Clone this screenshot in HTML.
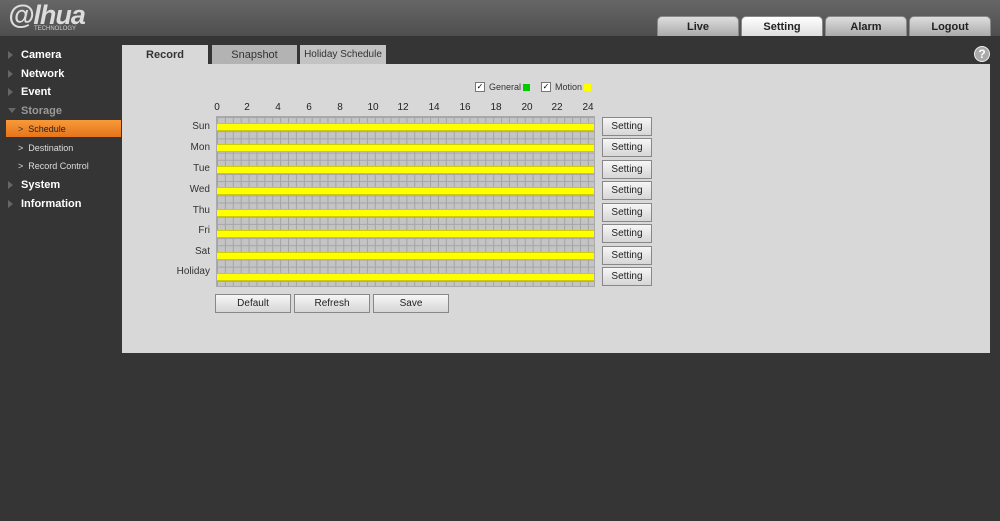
<!DOCTYPE html>
<html><head><meta charset="utf-8"><style>
*{margin:0;padding:0;box-sizing:border-box}
body{width:1000px;height:521px;background:#353535;font-family:"Liberation Sans",Arial,sans-serif;position:relative;overflow:hidden;font-size:11px}
.hdr{position:absolute;left:0;top:0;width:1000px;height:36px;background:linear-gradient(#666,#4e4e4e)}
.logo{position:absolute;left:8px;top:0px;color:#ddd;font:italic bold 27px "Liberation Sans",sans-serif;letter-spacing:-1px}
.tech{position:absolute;left:34px;top:26px;color:#ccc;font-size:6px}
.nt{position:absolute;top:16px;height:20px;width:82px;border-radius:5px 5px 0 0;background:linear-gradient(#ddd,#aaa);border:1px solid #888;border-bottom:0;text-align:center;font-weight:bold;font-size:11px;line-height:20px;color:#222}
.nt.on{background:linear-gradient(#fff,#ddd)}
.side{position:absolute;left:0;color:#fff;font-weight:bold;font-size:11px}
.tri{position:absolute;left:8px;width:0;height:0;border-left:5px solid #666;border-top:4px solid transparent;border-bottom:4px solid transparent}
.sub{position:absolute;left:18px;color:#ddd;font-size:9px}
.tab{position:absolute;top:45px;height:20px;text-align:center;line-height:20px;font-size:11px;color:#333}
.panel{position:absolute;left:122px;top:64px;width:868px;height:289px;background:#d8d8d8}
.grid{position:absolute;left:216px;top:116px;width:379px;height:171px;background-color:#c4c4c4;
background-image:linear-gradient(90deg,#a4a4a4 1px,transparent 1px),linear-gradient(#a4a4a4 1px,transparent 1px);
background-size:7.9px 7.13px;border:1px solid #aaa}
.bar{position:absolute;left:217px;width:377px;height:8px;background:#ffff00;border-top:1px solid #cc0;border-bottom:1px solid #cc0}
.lbl{position:absolute;width:50px;left:160px;text-align:right;font-size:10px;color:#333}
.hr{position:absolute;top:102px;font-size:10px;color:#222;width:20px;text-align:center}
.btn{position:absolute;height:19px;background:linear-gradient(#f6f6f6,#d6d6d6);border:1px solid #888;font-size:10px;text-align:center;line-height:17px;color:#222}
</style></head><body>
<div class="hdr"><div class="logo">@lhua</div><div class="tech">TECHNOLOGY</div>
<div class="nt" style="left:657px">Live</div><div class="nt on" style="left:741px">Setting</div><div class="nt" style="left:825px">Alarm</div><div class="nt" style="left:909px">Logout</div></div>
<div style="position:absolute;left:974px;top:46px;width:16px;height:16px;border-radius:50%;background:#aaa;border:1px solid #eee;color:#fff;font-weight:bold;font-size:12px;text-align:center;line-height:14px">?</div>

<div class="tri" style="top:51px"></div><div class="side" style="left:21px;top:49px">Camera</div>
<div class="tri" style="top:70px"></div><div class="side" style="left:21px;top:68px">Network</div>
<div class="tri" style="top:88px"></div><div class="side" style="left:21px;top:86px">Event</div>
<div style="position:absolute;left:8px;top:108px;border-top:5px solid #666;border-left:4px solid transparent;border-right:4px solid transparent"></div><div class="side" style="left:21px;top:105px;color:#999">Storage</div>
<div style="position:absolute;left:6px;top:120px;width:115px;height:17px;background:linear-gradient(#f89a3a,#e5741a)"></div>
<div class="sub" style="top:124px;color:#333">&gt;&nbsp; <span style="color:#222">Schedule</span></div>
<div class="sub" style="top:143px">&gt;&nbsp; Destination</div>
<div class="sub" style="top:161px">&gt;&nbsp; Record Control</div>
<div class="tri" style="top:181px"></div><div class="side" style="left:21px;top:179px">System</div>
<div class="tri" style="top:200px"></div><div class="side" style="left:21px;top:198px">Information</div>

<div class="tab" style="left:122px;width:86px;background:#d8d8d8;font-weight:bold">Record</div>
<div class="tab" style="left:212px;width:85px;background:#b3b3b3">Snapshot</div>
<div class="tab" style="left:300px;width:86px;background:#c3c3c3;font-size:10px">Holiday Schedule</div>
<div class="panel"></div>

<div style="position:absolute;left:475px;top:82px;width:10px;height:10px;border:1px solid #777;background:#fff;font-size:8px;line-height:8px;text-align:center">✓</div>
<div style="position:absolute;left:489px;top:82px;font-size:9px;color:#333">General</div>
<div style="position:absolute;left:523px;top:84px;width:7px;height:7px;background:#0c0"></div>
<div style="position:absolute;left:541px;top:82px;width:10px;height:10px;border:1px solid #777;background:#fff;font-size:8px;line-height:8px;text-align:center">✓</div>
<div style="position:absolute;left:555px;top:82px;font-size:9px;color:#333">Motion</div>
<div style="position:absolute;left:584px;top:84px;width:7px;height:7px;background:#ff0"></div>

<div class="hr" style="left:207px">0</div><div class="hr" style="left:237px">2</div><div class="hr" style="left:268px">4</div><div class="hr" style="left:299px">6</div><div class="hr" style="left:330px">8</div><div class="hr" style="left:363px">10</div><div class="hr" style="left:393px">12</div><div class="hr" style="left:424px">14</div><div class="hr" style="left:455px">16</div><div class="hr" style="left:486px">18</div><div class="hr" style="left:517px">20</div><div class="hr" style="left:547px">22</div><div class="hr" style="left:578px">24</div>
<div class="grid"></div>
<div class="bar" style="top:123px"></div><div class="bar" style="top:144px"></div><div class="bar" style="top:166px"></div><div class="bar" style="top:187px"></div><div class="bar" style="top:209px"></div><div class="bar" style="top:230px"></div><div class="bar" style="top:252px"></div><div class="bar" style="top:273px"></div>
<div class="lbl" style="top:121px">Sun</div><div class="lbl" style="top:142px">Mon</div><div class="lbl" style="top:163px">Tue</div><div class="lbl" style="top:184px">Wed</div><div class="lbl" style="top:205px">Thu</div><div class="lbl" style="top:225px">Fri</div><div class="lbl" style="top:246px">Sat</div><div class="lbl" style="top:266px">Holiday</div>
<div class="btn" style="left:602px;top:117px;width:50px">Setting</div>
<div class="btn" style="left:602px;top:138px;width:50px">Setting</div>
<div class="btn" style="left:602px;top:160px;width:50px">Setting</div>
<div class="btn" style="left:602px;top:181px;width:50px">Setting</div>
<div class="btn" style="left:602px;top:203px;width:50px">Setting</div>
<div class="btn" style="left:602px;top:224px;width:50px">Setting</div>
<div class="btn" style="left:602px;top:246px;width:50px">Setting</div>
<div class="btn" style="left:602px;top:267px;width:50px">Setting</div>
<div class="btn" style="left:215px;top:294px;width:76px">Default</div>
<div class="btn" style="left:294px;top:294px;width:76px">Refresh</div>
<div class="btn" style="left:373px;top:294px;width:76px">Save</div>
</body></html>
